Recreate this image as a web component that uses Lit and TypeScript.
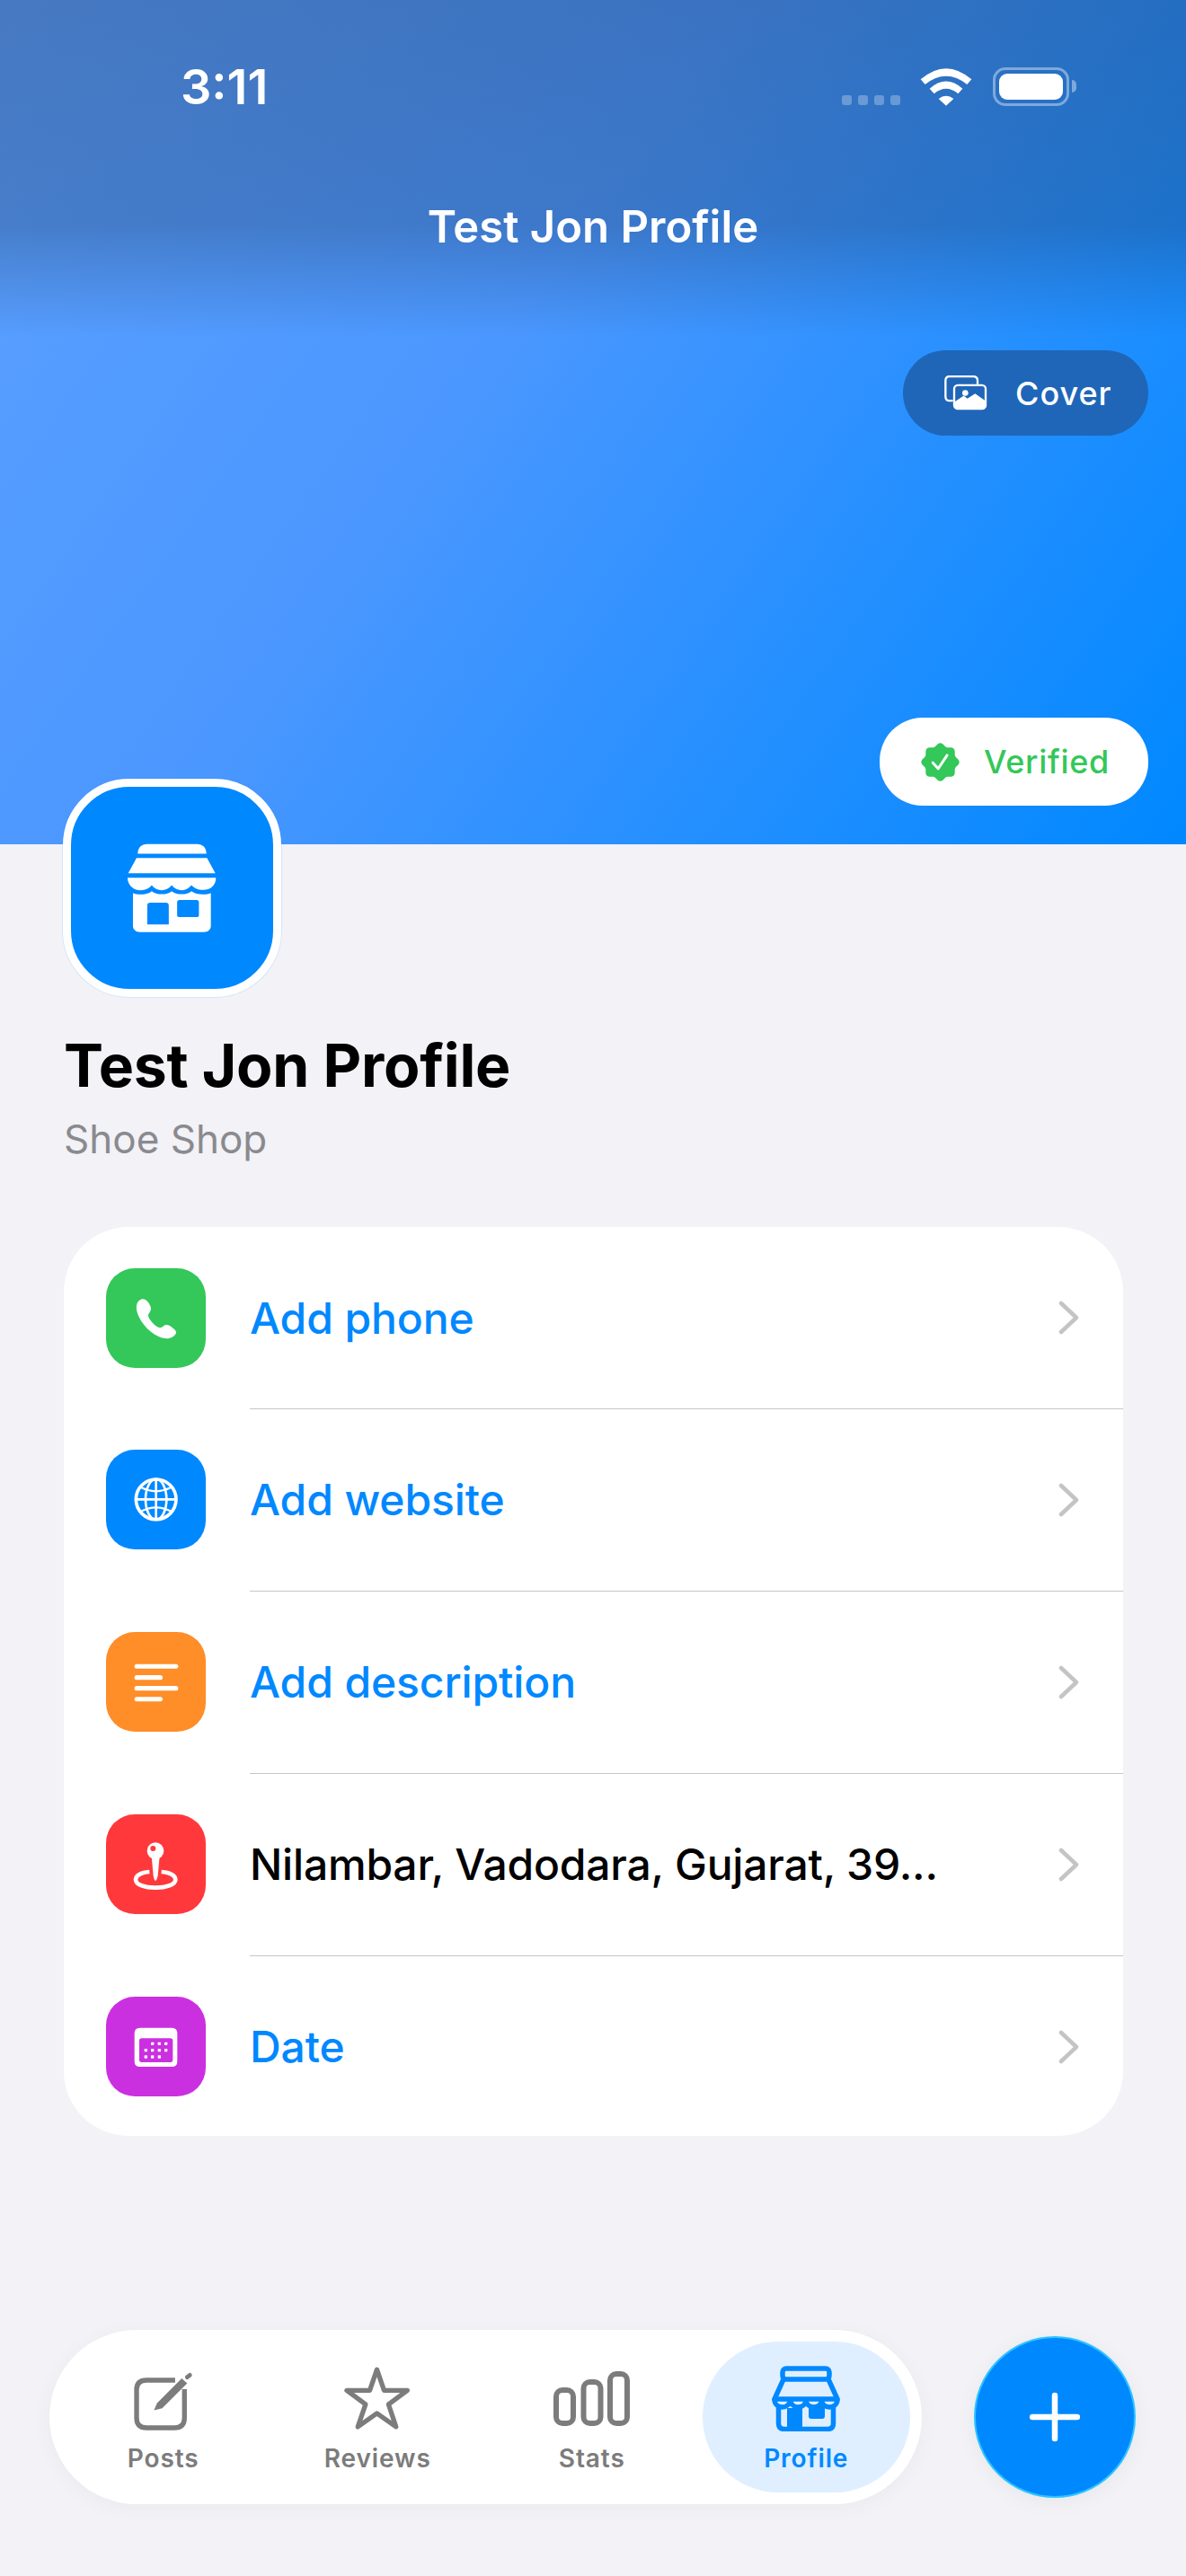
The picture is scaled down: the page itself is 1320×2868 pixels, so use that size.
import { LitElement, html, css, svg } from "lit";
import { customElement } from "lit/decorators.js";

// --- Data ---

interface InfoRow {
  label: string;
  tone: string;
  filled?: boolean;
  icon: unknown;
}

/** Wavy badge outline, centred on cx/cy. */
function badgePath(cx: number, cy: number, r: number, wave: number): string {
  const pts: string[] = [];
  for (let i = 0; i < 96; i++) {
    const a = (i / 96) * Math.PI * 2;
    const rad = r + wave * Math.cos(a * 8);
    pts.push(`${(cx + rad * Math.cos(a)).toFixed(1)} ${(cy + rad * Math.sin(a)).toFixed(1)}`);
  }
  return `M${pts.join("L")}Z`;
}

// --- Icons ---

const STORE_ICON = html`<svg class="store" viewBox="300 290 310 310">
  <path fill="#fff" d="M340 331C340 310 352 298 372 298H538C558 298 570 310 570 331Z" />
  <path fill="#fff" d="M336 345H572L600 396H308Z" />
  <path
    fill="#fff"
    d="M306 411H602C602 435 585 452 560 452C540 452 528 445 520 436C510 447 500 453 488 453C475 453 462 447 454 436C445 447 432 453 420 453C408 453 395 447 387 436C378 447 365 453 350 453C325 453 306 435 306 411Z"
  />
  <path
    fill="#fff"
    fill-rule="evenodd"
    d="M324 462C338 469 370 470 387 456C402 469 438 470 454 456C468 469 505 470 520 456C535 469 570 469 585 462V572C585 585 575 593 562 593H347C334 593 324 585 324 572ZM372 505Q372 495 382 495H434Q444 495 444 505V568H372ZM472 494Q472 486 480 486H537Q545 486 545 494V535Q545 543 537 543H480Q472 543 472 535Z"
  />
</svg>`;

const COVER_ICON = html`<svg class="cover-icon" viewBox="270 135 150 122">
  <path
    d="M302 222H290Q277 222 277 208V155Q277 141 290 141H370Q384 141 384 155V167"
    fill="none"
    stroke="#fff"
    stroke-width="7"
  />
  <rect x="306" y="170" width="105" height="79" rx="12" fill="none" stroke="#fff" stroke-width="7" />
  <circle cx="343" cy="196" r="10" fill="#fff" />
  <path fill="#fff" d="M308 225L338 205L350 215L376 198L410 222V240Q410 250 400 250H318Q308 250 308 240Z" />
</svg>`;

const VERIFIED_ICON = html`<svg class="verified-icon" viewBox="190 1325 130 130">
  <path fill="#34c759" d=${badgePath(255, 1390, 59, 5)} />
  <path d="M230 1392L248 1412L278 1367" fill="none" stroke="#fff" stroke-width="9" stroke-linecap="round" stroke-linejoin="round" />
</svg>`;

const PHONE = svg`<path fill="#fff" d="M205 196C190 200 185 215 187 232C192 262 222 305 262 322C280 330 305 332 318 312C322 303 315 298 305 290C295 283 285 278 275 288C268 294 258 292 248 283C238 274 226 260 226 250C226 244 236 238 235 225C232 213 220 193 205 196Z"/>`;

const GLOBE = svg`<g transform="translate(0 -609)" fill="none" stroke="#fff">
  <circle cx="252" cy="868" r="67" stroke-width="11"/>
  <ellipse cx="252" cy="868" rx="35" ry="68" stroke-width="8"/>
  <path d="M252 800V936M184 868H320" stroke-width="8"/>
  <path d="M198 826Q252 856 306 826M198 910Q252 880 306 910" stroke-width="7"/>
</g>`;

const LINES = svg`<g transform="translate(0 -17)" fill="#fff">
  <rect x="180" y="217" width="146" height="15" rx="7.5"/>
  <rect x="180" y="254" width="94" height="16" rx="8"/>
  <rect x="180" y="290" width="146" height="16" rx="8"/>
  <rect x="180" y="327" width="94" height="15" rx="7.5"/>
</g>`;

const PIN = svg`<g transform="translate(0 -627)">
  <path fill="none" stroke="#fff" stroke-width="14" d="M230 912C200 914 184 925 184 938C184 955 215 965 250 965C285 965 317 955 317 938C317 925 300 914 270 912"/>
  <path fill="#fff" d="M237 860H264L258 925Q254 942 250 942Q246 942 243 925Z"/>
  <circle cx="250" cy="842" r="28" fill="#fff"/>
  <circle cx="242" cy="834" r="9" fill="#ff383c"/>
</g>`;

const CAL_DOTS: [number, number][] = [
  [240, 225], [263, 225], [285, 225],
  [218, 247], [240, 247], [263, 247], [285, 247],
  [218, 269], [240, 269], [263, 269],
];

const CALENDAR = svg`<g transform="translate(0 25)">
  <path fill="#fff" fill-rule="evenodd" d="M198 172H305Q323 172 323 190V284Q323 302 305 302H198Q180 302 180 284V190Q180 172 198 172ZM204 207Q196 207 196 215V279Q196 287 204 287H300Q308 287 308 279V215Q308 207 300 207Z"/>
  ${CAL_DOTS.map(([x, y]) => svg`<rect x=${x - 5} y=${y - 5} width="10" height="10" rx="2" fill="#fff"/>`)}
</g>`;

const ROWS: InfoRow[] = [
  { label: "Add phone", tone: "#34c759", icon: PHONE },
  { label: "Add website", tone: "#0088ff", icon: GLOBE },
  { label: "Add description", tone: "#ff8d28", icon: LINES },
  { label: "Nilambar, Vadodara, Gujarat, 39...", tone: "#ff383c", filled: true, icon: PIN },
  { label: "Date", tone: "#cb30e0", icon: CALENDAR },
];

const TABS = [
  {
    label: "Posts",
    icon: html`<svg class="tab-icon" style="width:67px;height:67px;margin-top:6px" viewBox="330 210 200 200" fill="none">
      <path stroke="#7c7c7c" stroke-width="16" d="M470 240H375Q342 240 342 272V365Q342 398 375 398H468Q501 398 501 365V270" />
      <path fill="#7c7c7c" d="M400 340L410 316L492 234L510 250L427 333Z" />
      <path stroke="#7c7c7c" stroke-width="14" stroke-linecap="round" d="M510 230L519 223" />
    </svg>`,
  },
  {
    label: "Reviews",
    icon: html`<svg class="tab-icon" style="width:78px;height:75px" viewBox="1020 190 235 225" fill="none">
      <path
        stroke="#7c7c7c"
        stroke-width="16"
        stroke-linejoin="round"
        d="M1136 205L1160 275H1238L1175 322L1200 397L1136 352L1072 397L1098 322L1035 275H1112Z"
      />
    </svg>`,
  },
  {
    label: "Stats",
    icon: html`<svg class="tab-icon" style="width:85px;height:61px" viewBox="0 0 85 61" fill="none" stroke="#7c7c7c" stroke-width="6">
      <rect x="3" y="21" width="19" height="37" rx="7" />
      <rect x="33.500" y="12" width="19" height="46" rx="7" />
      <rect x="63" y="3" width="19" height="55" rx="7" />
    </svg>`,
  },
  {
    label: "Profile",
    active: true,
    icon: html`<svg class="tab-icon" style="width:76px;height:73px" viewBox="0 0 76 73" fill="none" stroke="#0088ff" stroke-width="5.500">
      <rect x="12" y="3" width="52" height="12" rx="4" />
      <path stroke-linejoin="round" d="M13 15L3 37H73L63 15" />
      <path d="M3 37C3 49 20 49 20.500 37C21 49 38 49 38 37C38 49 55.500 49 55.500 37C55.500 49 73 49 73 37" />
      <path d="M7.500 45V64Q7.500 70.500 14 70.500H62Q68.500 70.500 68.500 64V45" />
      <path fill="#0088ff" stroke="none" d="M17 47H34V71H17ZM41 48Q41 45 44 45H56Q59 45 59 48V56Q59 59 56 59H44Q41 59 41 56Z" />
    </svg>`,
  },
];

// --- Root element ---

@customElement("app-root")
export class AppRoot extends LitElement {
  static styles = css`
    :host {
      display: flex;
      flex-direction: column;
      width: 1320px;
      height: 2868px;
      background: #f2f2f7;
      font-family: Inter, "Liberation Sans", sans-serif;
      overflow: hidden;
    }

    .hero {
      height: 940px;
      box-sizing: border-box;
      display: flex;
      flex-direction: column;
      background:
        linear-gradient(to bottom, rgba(20, 30, 50, 0.3) 0, rgba(20, 30, 50, 0.26) 250px, rgba(20, 30, 50, 0) 375px),
        linear-gradient(125deg, #5ca0ff 0%, #4a97ff 42%, #0088ff 100%);
    }

    .status {
      height: 125px;
      box-sizing: border-box;
      padding: 70px 122px 0 201px;
      display: flex;
      justify-content: space-between;
    }

    .time {
      color: #fff;
      font-size: 54px;
      line-height: 54px;
      font-weight: 600;
    }

    .sys {
      display: flex;
      align-items: flex-end;
      height: 48px;
    }

    .dots {
      display: flex;
      gap: 7px;
      margin-right: 21px;
      padding-bottom: 1px;
    }

    .dots i {
      width: 11px;
      height: 11px;
      border-radius: 3px;
      background: rgba(255, 255, 255, 0.28);
    }

    .wifi {
      width: 60px;
      height: 45px;
      margin-right: 22px;
      margin-bottom: -1px;
    }

    .battery {
      box-sizing: border-box;
      width: 85px;
      height: 43px;
      padding: 4px;
      border: 3px solid rgba(255, 255, 255, 0.4);
      border-radius: 14px;
    }

    .battery span {
      display: block;
      height: 100%;
      background: #fff;
      border-radius: 9px;
    }

    .cap {
      width: 5px;
      height: 14px;
      margin: 0 0 15px 3px;
      background: rgba(255, 255, 255, 0.4);
      border-radius: 0 5px 5px 0;
    }

    .nav-title {
      color: #fff;
      font-size: 49px;
      line-height: 58px;
      font-weight: 600;
      text-align: center;
      margin-top: 99px;
    }

    .pill {
      display: flex;
      align-items: center;
      align-self: flex-end;
      margin-right: 42px;
      border-radius: 48px;
      font-size: 36px;
      font-weight: 500;
      letter-spacing: 1px;
    }

    .cover {
      height: 95px;
      width: 273px;
      box-sizing: border-box;
      margin-top: 108px;
      padding-left: 45px;
      background: #1f66b8;
      color: #fff;
    }

    .cover-icon {
      width: 50px;
      height: 41px;
      margin-right: 30px;
    }

    .verified {
      height: 98px;
      width: 299px;
      box-sizing: border-box;
      margin-top: 314px;
      padding-left: 46px;
      background: #fff;
      color: #34c759;
      letter-spacing: 0.7px;
    }

    .verified-icon {
      width: 43px;
      height: 43px;
      margin-right: 27px;
    }

    .profile {
      padding: 0 71px;
      margin-top: -73px;
    }

    .avatar {
      box-sizing: border-box;
      width: 243px;
      height: 243px;
      margin-left: -1px;
      border: 9px solid #fff;
      border-radius: 74px;
      background: #0088ff;
      box-shadow: 0 0 0 1px rgba(0, 136, 255, 0.12);
      display: flex;
      align-items: center;
      justify-content: center;
    }

    .store {
      width: 103px;
      height: 103px;
    }

    h1 {
      margin: 38px 0 0;
      font-size: 66px;
      line-height: 76px;
      font-weight: 700;
      color: #000;
      letter-spacing: -0.25px;
    }

    .kind {
      margin-top: 18px;
      font-size: 44px;
      line-height: 52px;
      color: #8a8a8e;
    }

    .card {
      margin: 72px 70px 0 71px;
      background: #fff;
      border-radius: 72px;
    }

    .row {
      display: flex;
      align-items: center;
      height: 202px;
      padding-left: 47px;
      position: relative;
    }

    .row + .row {
      height: 203px;
    }

    .row:last-child {
      margin-bottom: -2px;
    }

    .row + .row::before {
      content: "";
      position: absolute;
      left: 207px;
      right: 0;
      top: 0;
      height: 1px;
      background: #c6c6c8;
    }

    .badge {
      width: 111px;
      height: 111px;
      border-radius: 32px;
      flex: none;
    }

    .badge svg {
      display: block;
      width: 111px;
      height: 111px;
    }

    .label {
      flex: 1;
      margin-left: 49px;
      font-size: 48px;
      font-weight: 500;
      letter-spacing: -0.1px;
      color: #0088ff;
      white-space: nowrap;
    }

    .label.filled {
      color: #000;
      font-weight: 450;
      letter-spacing: -0.2px;
    }

    .chevron {
      width: 26px;
      height: 38px;
      margin-right: 47px;
    }

    .bottom {
      margin-top: auto;
      padding: 0 56px 80px 55px;
      display: flex;
      align-items: center;
      justify-content: space-between;
    }

    .tabs {
      display: flex;
      gap: 7px;
      box-sizing: border-box;
      width: 971px;
      height: 194px;
      padding: 13px 13px 13px 11px;
      background: #fff;
      border-radius: 97px;
      box-shadow: 0 4px 24px rgba(0, 0, 0, 0.04);
    }

    .tab {
      flex: 1;
      display: flex;
      flex-direction: column;
      align-items: center;
      border-radius: 85px;
      color: #7c7c7c;
      font-size: 28px;
      font-weight: 600;
      letter-spacing: 0.9px;
    }

    .tab.active {
      background: #dfefff;
      color: #0088ff;
    }

    .tab-box {
      height: 76px;
      margin-top: 25px;
      display: flex;
      align-items: center;
      justify-content: center;
    }

    .tab-text {
      margin-top: 12px;
      line-height: 34px;
    }

    .fab {
      box-sizing: border-box;
      width: 180px;
      height: 180px;
      border-radius: 50%;
      background: #0088ff;
      border: 2px solid #2cc4ff;
      box-shadow: 0 4px 24px rgba(0, 0, 0, 0.05);
      display: flex;
      align-items: center;
      justify-content: center;
    }

    .fab svg {
      width: 56px;
      height: 56px;
    }
  `;

  render() {
    return html`
      <section class="hero">
        <div class="status">
          <span class="time">3:11</span>
          <div class="sys">
            <div class="dots"><i></i><i></i><i></i><i></i></div>
            <svg class="wifi" viewBox="430 100 180 135">
              <path fill="#fff" d="M435 143Q520 70 605 143L590 160Q520 105 450 160Z" />
              <path fill="#fff" d="M465 174Q520 125 575 174L560 191Q520 158 480 191Z" />
              <path fill="#fff" d="M495 208Q520 188 545 208L520 231Z" />
            </svg>
            <div class="battery"><span></span></div>
            <div class="cap"></div>
          </div>
        </div>
        <div class="nav-title">Test Jon Profile</div>
        <div class="pill cover">${COVER_ICON}<span>Cover</span></div>
        <div class="pill verified">${VERIFIED_ICON}<span>Verified</span></div>
      </section>

      <section class="profile">
        <div class="avatar">${STORE_ICON}</div>
        <h1>Test Jon Profile</h1>
        <div class="kind">Shoe Shop</div>
      </section>

      <section class="card">
        ${ROWS.map(
          (r) => html`
            <div class="row">
              <div class="badge" style="background:${r.tone}">
                <svg viewBox="85 93 333 333">${r.icon}</svg>
              </div>
              <span class="label ${r.filled ? "filled" : ""}">${r.label}</span>
              <svg class="chevron" viewBox="0 0 26 38" fill="none">
                <path d="M4 3L21 19L4 35" stroke="#c4c4c6" stroke-width="4.500" stroke-linecap="round" stroke-linejoin="round" />
              </svg>
            </div>
          `,
        )}
      </section>

      <div class="bottom">
        <nav class="tabs">
          ${TABS.map(
            (t) => html`
              <div class="tab ${t.active ? "active" : ""}">
                <div class="tab-box">${t.icon}</div>
                <span class="tab-text">${t.label}</span>
              </div>
            `,
          )}
        </nav>
        <div class="fab">
          <svg viewBox="0 0 56 56" fill="none">
            <path d="M28 4V52M3 28H53" stroke="#fff" stroke-width="6.500" stroke-linecap="round" />
          </svg>
        </div>
      </div>
    `;
  }
}
